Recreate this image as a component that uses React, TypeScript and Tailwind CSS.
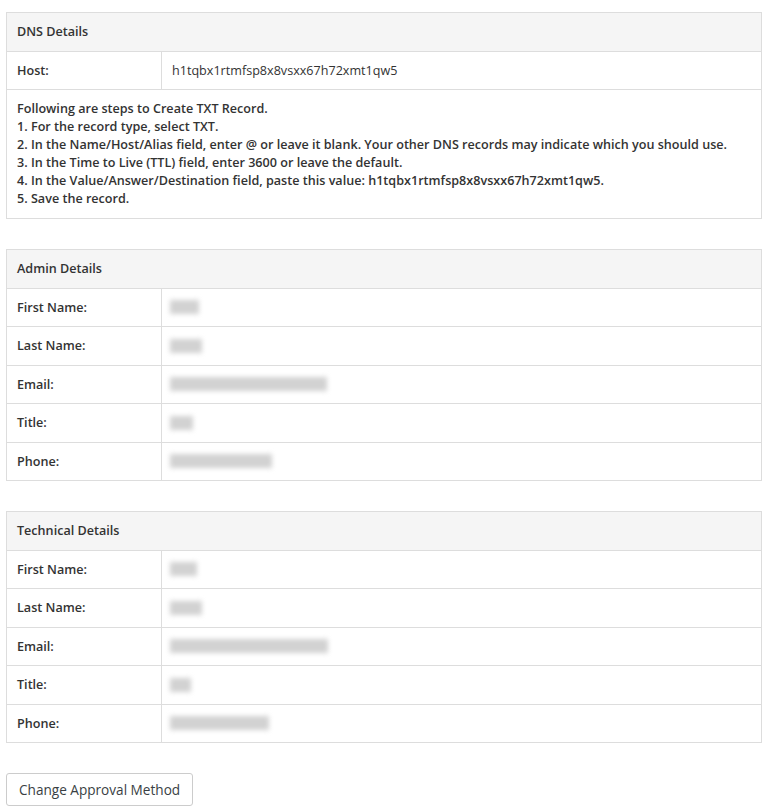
const font = { fontFamily: '"Open Sans", "Liberation Sans", sans-serif' };

type Row = { label: string; blur: number };

const admin: Row[] = [
  { label: 'First Name:', blur: 29 },
  { label: 'Last Name:', blur: 32 },
  { label: 'Email:', blur: 157 },
  { label: 'Title:', blur: 23 },
  { label: 'Phone:', blur: 102 },
];

const technical: Row[] = [
  { label: 'First Name:', blur: 27 },
  { label: 'Last Name:', blur: 32 },
  { label: 'Email:', blur: 158 },
  { label: 'Title:', blur: 21 },
  { label: 'Phone:', blur: 99 },
];

const widths: Record<number, string> = {
  21: 'w-[21px]',
  23: 'w-[23px]',
  27: 'w-[27px]',
  29: 'w-[29px]',
  32: 'w-[32px]',
  99: 'w-[99px]',
  102: 'w-[102px]',
  157: 'w-[157px]',
  158: 'w-[158px]',
};

// blurred-out personal values, as in the screenshot
function Blurred({ w }: { w: number }) {
  return (
    <span className={`inline-block h-[14px] align-middle bg-[#d2d2d2] blur-[2.5px] ${widths[w]}`} />
  );
}

function Header({ title }: { title: string }) {
  return (
    <div className="bg-[#f5f5f5] px-[10px] py-[10px] leading-[17.5px] font-semibold border-b border-[#ddd]">
      {title}
    </div>
  );
}

function DetailsTable({ title, rows }: { title: string; rows: Row[] }) {
  return (
    <div className="border border-[#ddd]">
      <Header title={title} />
      {rows.map((r, i) => (
        <div
          key={r.label}
          className={`grid grid-cols-[155px_1fr] leading-[17.5px] ${i < rows.length - 1 ? 'border-b border-[#ddd]' : ''}`}
        >
          <div className="px-[10px] py-[10px] font-semibold border-r border-[#ddd]">{r.label}</div>
          <div className="px-[8px] py-[10px] flex items-center">
            <Blurred w={r.blur} />
          </div>
        </div>
      ))}
    </div>
  );
}

export default function App() {
  return (
    <div className="min-h-screen bg-white text-[12.6px] leading-[18px] text-[#333] px-[6px] pt-[12px]" style={font}>
      <div className="flex flex-col gap-[30px]">
        <div className="border border-[#ddd]">
          <Header title="DNS Details" />
          <div className="grid grid-cols-[155px_1fr] leading-[17.5px] border-b border-[#ddd]">
            <div className="px-[10px] py-[10px] font-semibold border-r border-[#ddd]">Host:</div>
            <div className="px-[10px] py-[10px]">h1tqbx1rtmfsp8x8vsxx67h72xmt1qw5</div>
          </div>
          <div className="px-[10px] py-[10px] font-semibold">
            <div>Following are steps to Create TXT Record.</div>
            <div>1. For the record type, select TXT.</div>
            <div>2. In the Name/Host/Alias field, enter @ or leave it blank. Your other DNS records may indicate which you should use.</div>
            <div>3. In the Time to Live (TTL) field, enter 3600 or leave the default.</div>
            <div>4. In the Value/Answer/Destination field, paste this value: h1tqbx1rtmfsp8x8vsxx67h72xmt1qw5.</div>
            <div>5. Save the record.</div>
          </div>
        </div>

        <DetailsTable title="Admin Details" rows={admin} />
        <DetailsTable title="Technical Details" rows={technical} />

        <div>
          <button className="h-[33px] px-[12px] border border-[#ccc] rounded-[3px] bg-white text-[13.6px] leading-[20px] text-[#3a3f44]">
            Change Approval Method
          </button>
        </div>
      </div>
    </div>
  );
}
